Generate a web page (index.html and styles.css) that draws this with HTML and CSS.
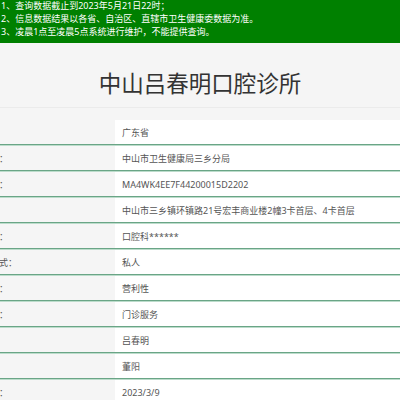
FILE: index.html
```html
<!DOCTYPE html>
<html lang="zh-CN">
<head>
<meta charset="utf-8">
<title>中山吕春明口腔诊所</title>
<link rel="stylesheet" href="styles.css">
</head>
<body>
<div class="notice">
  <p>1、查询数据截止到2023年5月21日22时；</p>
  <p>2、信息数据结果以各省、自治区、直辖市卫生健康委数据为准。</p>
  <p>3、凌晨1点至凌晨5点系统进行维护，不能提供查询。</p>
</div>
<div class="head">
  <h1 class="title">中山吕春明口腔诊所</h1>
</div>
<div class="info">
  <div class="row"><div class="label">省份：</div><div class="value">广东省</div></div>
  <div class="row"><div class="label">登记机关：</div><div class="value">中山市卫生健康局三乡分局</div></div>
  <div class="row"><div class="label">登记号码：</div><div class="value">MA4WK4EE7F44200015D2202</div></div>
  <div class="row"><div class="label">地址：</div><div class="value">中山市三乡镇环镇路21号宏丰商业楼2幢3卡首层、4卡首层</div></div>
  <div class="row"><div class="label">诊疗科目：</div><div class="value">口腔科******</div></div>
  <div class="row"><div class="label">所有制形式：</div><div class="value">私人</div></div>
  <div class="row"><div class="label">经营性质：</div><div class="value">营利性</div></div>
  <div class="row"><div class="label">服务对象：</div><div class="value">门诊服务</div></div>
  <div class="row"><div class="label">法人：</div><div class="value">吕春明</div></div>
  <div class="row"><div class="label">负责人：</div><div class="value">董阳</div></div>
  <div class="row"><div class="label">发证日期：</div><div class="value">2023/3/9</div></div>
</div>
</body>
</html>
```
FILE: styles.css
```css
html, body {
  margin: 0;
  padding: 0;
  background: #f5f5f5;
  overflow: hidden;
}
body {
  font-family: "Noto Sans", "Noto Sans CJK SC", sans-serif;
  color: #555;
}
.notice {
  background: #008000;
  color: #fff;
  font-size: 9px;
  line-height: 13px;
  padding: 0 0 5px 1px;
  margin-top: -1px;
}
.notice p {
  margin: 0;
  white-space: nowrap;
}
.head {
  padding: 26px 0 8px;
  border-bottom: 1px solid #ebebeb;
  margin-bottom: 12px;
}
.title {
  margin: 0;
  text-align: center;
  font-size: 22.5px;
  line-height: 30px;
  font-weight: normal;
  color: #333;
}
.info {
  margin-left: -44px;
}
.row {
  display: flex;
  height: 24px;
  border-bottom: 1px solid #6aa586;
  box-shadow: 0 1px 0 #bcdccb;
  margin-bottom: 1px;
  font-size: 9px;
}
.label {
  flex: 0 0 159px;
  box-sizing: border-box;
  padding-left: 7px;
  display: flex;
  align-items: center;
  background: #f5f5f5;
  white-space: nowrap;
}
.value {
  flex: 1;
  background: #fff;
  padding-left: 7px;
  display: flex;
  align-items: center;
  white-space: nowrap;
}
```
